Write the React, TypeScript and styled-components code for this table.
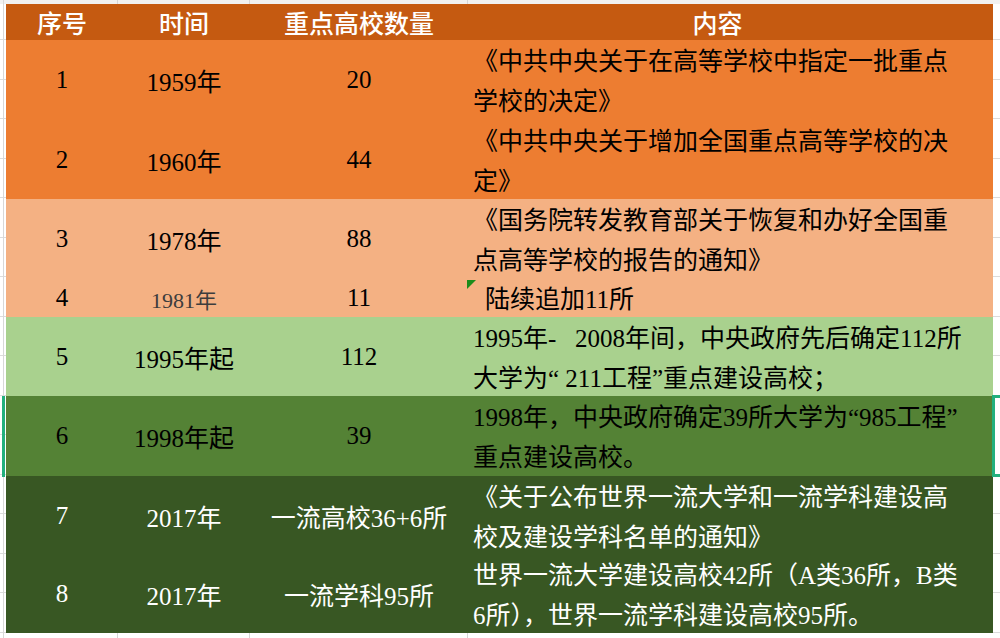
import React from "react";
import styled, { createGlobalStyle } from "styled-components";

const GlobalStyle = createGlobalStyle`
  html, body { margin: 0; padding: 0; background: #fff; }
  #root { width: 1000px; height: 638px; }
`;

const COLS = "112px 132px 218px 525px";

const Sheet = styled.div`
  position: relative;
  width: 1000px;
  height: 638px;
  overflow: hidden;
  box-sizing: border-box;
  padding: 4px 0 0 6px;
  background-color: #fff;
  background-image:
    linear-gradient(to right, transparent 3px, #d8d8d8 3px, #d8d8d8 4px, transparent 4px,
      transparent 117px, #d6d6d6 117px, #d6d6d6 118px, transparent 118px,
      transparent 249px, #d6d6d6 249px, #d6d6d6 250px, transparent 250px,
      transparent 467px, #d6d6d6 467px, #d6d6d6 468px, transparent 468px),
    repeating-linear-gradient(to bottom, transparent 0, transparent 38.5px, #dcdcdc 38.5px, #dcdcdc 39.5px),
    linear-gradient(#f1f1f1, #f1f1f1);
  background-size: 100% 100%, 100% 100%, 100% 4px;
  background-position: 0 0, 0 1px, 0 0;
  background-repeat: no-repeat, repeat, no-repeat;
`;

const Table = styled.div`
  display: flex;
  flex-direction: column;
  width: 987px;
  font-family: "Liberation Serif", "Noto Sans CJK SC", serif;
`;

const Row = styled.div<{ $h: number; $bg: string; $fg: string }>`
  display: grid;
  grid-template-columns: ${COLS};
  grid-template-rows: minmax(0, 1fr);
  height: ${(p) => p.$h}px;
  background: ${(p) => p.$bg};
  color: ${(p) => p.$fg};
`;

const HeaderCell = styled.div<{ $shift?: number }>`
  display: flex;
  align-items: center;
  justify-content: center;
  padding-right: ${(p) => p.$shift ?? 0}px;
  font-family: "Noto Sans CJK SC", sans-serif;
  font-weight: 500;
  font-size: 25px;
  color: #fff;
  white-space: nowrap;
`;

const Cell = styled.div<{ $muted?: boolean }>`
  display: flex;
  align-items: center;
  justify-content: center;
  font-size: ${(p) => (p.$muted ? 22 : 25)}px;
  color: ${(p) => (p.$muted ? "#3d3d3d" : "inherit")};
  white-space: nowrap;
`;

const Content = styled.div`
  position: relative;
  display: flex;
  flex-direction: column;
  justify-content: center;
  padding-left: 5px;
  font-size: 25px;
`;

const Line = styled.div<{ $indent?: number }>`
  height: 40px;
  line-height: 44px;
  white-space: nowrap;
  padding-left: ${(p) => p.$indent ?? 0}px;
`;

const ErrorFlag = styled.span`
  position: absolute;
  left: -1px;
  top: 2px;
  width: 0;
  height: 0;
  border-top: 9px solid #1b8c1b;
  border-right: 9px solid transparent;
`;

const SelBar = styled.div`
  position: absolute;
  left: 2px;
  top: 396px;
  width: 3px;
  height: 81px;
  background: #22b07d;
`;

const SelBox = styled.div`
  position: absolute;
  left: 992px;
  top: 395px;
  width: 30px;
  height: 82px;
  box-sizing: border-box;
  border: 3px solid #22b07d;
  background: #fff;
`;

type Rec = {
  n: string;
  year: string;
  count: string;
  lines: string[];
  bg: string;
  fg: string;
  h: number;
  muted?: boolean;
  indent?: number;
  flag?: boolean;
};

const ORANGE = "#ED7D31";
const PEACH = "#F4B183";
const LIGHTGREEN = "#A9D18E";
const GREEN = "#548235";
const DARKGREEN = "#385723";

const rows: Rec[] = [
  { n: "1", year: "1959年", count: "20", lines: ["《中共中央关于在高等学校中指定一批重点", "学校的决定》"], bg: ORANGE, fg: "#000", h: 80 },
  { n: "2", year: "1960年", count: "44", lines: ["《中共中央关于增加全国重点高等学校的决", "定》"], bg: ORANGE, fg: "#000", h: 79 },
  { n: "3", year: "1978年", count: "88", lines: ["《国务院转发教育部关于恢复和办好全国重", "点高等学校的报告的通知》"], bg: PEACH, fg: "#000", h: 79 },
  { n: "4", year: "1981年", count: "11", lines: ["陆续追加11所"], bg: PEACH, fg: "#000", h: 39, muted: true, indent: 12, flag: true },
  { n: "5", year: "1995年起", count: "112", lines: ["1995年-\u00a0\u00a0\u00a02008年间，中央政府先后确定112所", "大学为“\u00a0211工程”重点建设高校；"], bg: LIGHTGREEN, fg: "#000", h: 79 },
  { n: "6", year: "1998年起", count: "39", lines: ["1998年，中央政府确定39所大学为“985工程”", "重点建设高校。"], bg: GREEN, fg: "#000", h: 80 },
  { n: "7", year: "2017年", count: "一流高校36+6所", lines: ["《关于公布世界一流大学和一流学科建设高", "校及建设学科名单的通知》"], bg: DARKGREEN, fg: "#fff", h: 79 },
  { n: "8", year: "2017年", count: "一流学科95所", lines: ["世界一流大学建设高校42所（A类36所，B类", "6所），世界一流学科建设高校95所。"], bg: DARKGREEN, fg: "#fff", h: 78 },
];

export default function App() {
  return (
    <>
      <GlobalStyle />
      <Sheet>
        <Table>
          <Row $h={36} $bg="#C55A11" $fg="#fff">
            <HeaderCell>序号</HeaderCell>
            <HeaderCell>时间</HeaderCell>
            <HeaderCell>重点高校数量</HeaderCell>
            <HeaderCell $shift={26}>内容</HeaderCell>
          </Row>
          {rows.map((r) => (
            <Row key={r.n} $h={r.h} $bg={r.bg} $fg={r.fg}>
              <Cell>{r.n}</Cell>
              <Cell $muted={r.muted}>{r.year}</Cell>
              <Cell>{r.count}</Cell>
              <Content>
                {r.flag && <ErrorFlag />}
                {r.lines.map((l, i) => (
                  <Line key={i} $indent={r.indent}>
                    {l}
                  </Line>
                ))}
              </Content>
            </Row>
          ))}
        </Table>
        <SelBar />
        <SelBox />
      </Sheet>
    </>
  );
}
